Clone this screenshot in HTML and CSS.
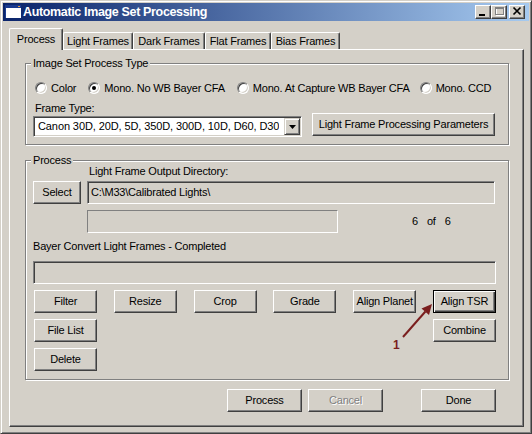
FILE: index.html
```html
<!DOCTYPE html>
<html>
<head>
<meta charset="utf-8">
<title>Automatic Image Set Processing</title>
<link rel="stylesheet" href="styles.css">
</head>
<body>
<div class="window">
  <div class="titlebar">
    <svg class="app-icon" width="16" height="14" viewBox="0 0 16 14">
      <rect x="0" y="0" width="16" height="13" fill="#ffffff"/>
      <rect x="0" y="0" width="16" height="3" fill="#1a3a8e"/>
      <rect x="0" y="0" width="1" height="13" fill="#1a3a8e"/>
      <rect x="13" y="1" width="2" height="1" fill="#e8a040"/>
    </svg>
    <span class="title">Automatic Image Set Processing</span>
    <div class="caption-buttons">
      <span class="cap-btn"><svg width="14" height="12" viewBox="0 0 14 12"><rect x="3" y="8" width="6" height="2" fill="#000"/></svg></span>
      <span class="cap-btn"><svg width="14" height="12" viewBox="0 0 14 12">
        <rect x="4.5" y="2.5" width="8" height="7" fill="none" stroke="#fff"/>
        <rect x="3.5" y="1.5" width="8" height="7" fill="none" stroke="#808080"/>
        <line x1="3.5" y1="2.5" x2="11.5" y2="2.5" stroke="#808080"/>
      </svg></span>
      <span class="cap-btn close"><svg width="14" height="12" viewBox="0 0 14 12"><path d="M3.5 1.5 L10.5 8.5 M10.5 1.5 L3.5 8.5" stroke="#000" stroke-width="1.7" fill="none"/></svg></span>
    </div>
  </div>

  <div class="tabs">
    <div class="tab active tab-process">Process</div>
    <div class="tab tab-light">Light Frames</div>
    <div class="tab tab-dark">Dark Frames</div>
    <div class="tab tab-flat">Flat Frames</div>
    <div class="tab tab-bias">Bias Frames</div>
  </div>

  <div class="panel">
    <div class="group group-type">
      <div class="group-title">Image Set Process Type</div>
      <div class="radios">
        <div class="radio"><span class="radio-circle"></span>Color</div>
        <div class="radio"><span class="radio-circle checked"></span>Mono. No WB Bayer CFA</div>
        <div class="radio"><span class="radio-circle"></span>Mono. At Capture WB Bayer CFA</div>
        <div class="radio"><span class="radio-circle"></span>Mono. CCD</div>
      </div>
      <div class="frame-row">
        <div class="frame-col">
          <div class="frame-label">Frame Type:</div>
          <div class="combo">
            <span class="combo-text">Canon 30D, 20D, 5D, 350D, 300D, 10D, D60, D30</span>
            <span class="combo-btn"><svg width="7" height="4" viewBox="0 0 7 4"><polygon points="0,0 7,0 3.5,4" fill="#000"/></svg></span>
          </div>
        </div>
        <div class="btn btn-params">Light Frame Processing Parameters</div>
      </div>
    </div>

    <div class="group group-process">
      <div class="group-title">Process</div>
      <div class="dir-row">
        <div class="btn btn-select">Select</div>
        <div class="dir-col">
          <div class="dir-label">Light Frame Output Directory:</div>
          <div class="field">C:\M33\Calibrated Lights\</div>
          <div class="status-row">
            <div class="static-box"></div>
            <div class="counter"><span>6</span><span>of</span><span>6</span></div>
          </div>
        </div>
      </div>
      <div class="bayer-label">Bayer Convert Light Frames - Completed</div>
      <div class="progress"></div>
      <div class="btn-grid">
        <div class="btn">Filter</div>
        <div class="btn">Resize</div>
        <div class="btn">Crop</div>
        <div class="btn">Grade</div>
        <div class="btn">Align Planet</div>
        <div class="btn default">Align TSR</div>
        <div class="btn col-first">File List</div>
        <div class="btn col-last">Combine</div>
        <div class="btn col-first">Delete</div>
      </div>
    </div>

    <div class="footer">
      <div class="btn btn-wide">Process</div>
      <div class="btn btn-wide disabled">Cancel</div>
      <div class="btn btn-wide btn-done">Done</div>
    </div>
  </div>

  <div class="annotation">
    <svg width="50" height="50" viewBox="0 0 50 50">
      <line x1="13" y1="37" x2="35.4" y2="11.5" stroke="#7a1e1e" stroke-width="2"/>
      <polygon points="42,4 39,15 31.5,8.5" fill="#7a1e1e"/>
    </svg>
    <span class="annotation-label">1</span>
  </div>
</div>
</body>
</html>
```

FILE: styles.css
```css
* {
  box-sizing: border-box;
}

body {
  margin: 0;
  background: #d4d0c8;
  font-family: "Liberation Sans", Arial, sans-serif;
  font-size: 11px;
  line-height: 13px;
  letter-spacing: -0.2px;
  color: #000;
}

.window {
  position: relative;
  width: 532px;
  height: 434px;
  background: #d4d0c8;
  border: 1px solid;
  border-color: #d4d0c8 #404040 #404040 #d4d0c8;
  box-shadow: inset 1px 1px #fff, inset -1px -1px #808080;
  padding: 2px;
}

/* Title bar */
.titlebar {
  display: flex;
  align-items: flex-start;
  height: 18px;
  background: linear-gradient(to right, #0a246a, #a6caf0);
}

.app-icon {
  flex: none;
  display: block;
  margin: 2px 0 0 2px;
}

.title {
  margin: 2px 0 0 2px;
  color: #fff;
  font-weight: bold;
  font-size: 12.5px;
  line-height: 14px;
  letter-spacing: -0.35px;
  white-space: nowrap;
}

.caption-buttons {
  display: flex;
  margin: 2px 4px 0 auto;
}

.cap-btn {
  display: block;
  width: 16px;
  height: 14px;
  background: #d4d0c8;
  border: 1px solid;
  border-color: #fff #404040 #404040 #fff;
  box-shadow: inset -1px -1px #808080;
}

.cap-btn svg {
  display: block;
}

.cap-btn.close {
  margin-left: 2px;
}

/* Tabs */
.tabs {
  display: flex;
  align-items: flex-end;
  height: 21px;
  margin: 7px 0 0 6px;
}

.tab {
  height: 17px;
  border: 1px solid;
  border-bottom: 0;
  border-color: #fff #404040 #404040 #fff;
  border-radius: 2px 2px 0 0;
  box-shadow: inset -1px 0 #808080;
  padding-top: 2px;
  text-align: center;
  white-space: nowrap;
  background: #d4d0c8;
}

.tab.active {
  position: relative;
  z-index: 1;
  height: 22px;
  margin-bottom: -1px;
  padding-top: 4px;
}

.tab-process { width: 54px; }
.tab-light { width: 70px; }
.tab-dark { width: 72px; }
.tab-flat { width: 66px; }
.tab-bias { width: 69px; }

/* Panel */
.panel {
  width: 515px;
  margin-left: 6px;
  border: 1px solid;
  border-color: #fff #404040 #404040 #fff;
  box-shadow: inset -1px -1px #808080;
  padding: 13px 0 14px 15px;
}

/* Group boxes */
.group {
  width: 484px;
  border: 1px solid #808080;
  box-shadow: inset 1px 1px #fff, 1px 1px #fff;
  padding: 0 0 7px 7px;
}

.group-title {
  display: table;
  height: 13px;
  margin: -7px 0 0 -2px;
  padding: 0 2px;
  background: #d4d0c8;
}

.group-process {
  margin-top: 15px;
  padding-bottom: 8px;
}

/* Radios */
.radios {
  display: flex;
  align-items: center;
  height: 14px;
  margin: 11px 0 0 2px;
}

.radio {
  display: flex;
  align-items: center;
  margin-right: 12px;
  white-space: nowrap;
}

.radio:nth-child(3) {
  margin-right: 10px;
}

.radio-circle {
  display: grid;
  place-items: center;
  width: 12px;
  height: 12px;
  margin-right: 4px;
  border-radius: 50%;
  background: #fff;
  border: 1px solid;
  border-color: #808080 #fff #fff #808080;
  box-shadow: inset 1px 1px #404040, inset -1px -1px #d4d0c8;
}

.radio-circle.checked::after {
  content: "";
  width: 4px;
  height: 4px;
  border-radius: 50%;
  background: #000;
}

/* Frame type row */
.frame-row {
  display: flex;
  align-items: flex-end;
  margin-top: 7px;
}

.frame-label {
  padding-left: 2px;
}

.combo {
  display: flex;
  align-items: center;
  width: 269px;
  height: 21px;
  margin-top: 1px;
  padding: 1px;
  background: #fff;
  border: 1px solid;
  border-color: #808080 #fff #fff #808080;
  box-shadow: inset 1px 1px #404040, inset -1px -1px #d4d0c8;
}

.combo-text {
  padding-left: 3px;
  letter-spacing: -0.1px;
  white-space: nowrap;
  overflow: hidden;
}

.combo-btn {
  display: flex;
  align-items: center;
  justify-content: center;
  flex: none;
  width: 16px;
  height: 17px;
  margin-left: auto;
  background: #d4d0c8;
  border: 1px solid;
  border-color: #d4d0c8 #404040 #404040 #d4d0c8;
  box-shadow: inset 1px 1px #fff, inset -1px -1px #808080;
}

.combo-btn svg {
  display: block;
}

/* Buttons */
.btn {
  display: flex;
  align-items: center;
  justify-content: center;
  height: 23px;
  background: #d4d0c8;
  border: 1px solid;
  border-color: #fff #404040 #404040 #fff;
  box-shadow: inset -1px -1px #808080;
  white-space: nowrap;
}

.btn.default {
  border-color: #000;
  box-shadow: inset 1px 1px #fff, inset -1px -1px #404040, inset -2px -2px #808080;
}

.btn.disabled {
  color: #808080;
  text-shadow: 1px 1px #fff;
}

.btn-params {
  width: 183px;
  margin: 0 0 1px 10px;
}

/* Process group */
.dir-row {
  display: flex;
  align-items: flex-start;
  margin-top: -2px;
}

.btn-select {
  width: 48px;
  margin-top: 16px;
}

.dir-col {
  margin-left: 6px;
}

.dir-label {
  padding-left: 2px;
}

.field {
  display: flex;
  align-items: center;
  width: 408px;
  height: 23px;
  margin-top: 3px;
  padding-left: 3px;
  border: 1px solid;
  border-color: #808080 #fff #fff #808080;
  box-shadow: inset 1px 1px #404040, inset -1px -1px #d4d0c8;
  white-space: nowrap;
}

.status-row {
  display: flex;
  align-items: center;
  height: 23px;
  margin-top: 6px;
}

.static-box {
  width: 251px;
  height: 23px;
  border: 1px solid;
  border-color: #808080 #fff #fff #808080;
}

.counter {
  display: flex;
  gap: 9px;
  margin-left: 74px;
}

.bayer-label {
  margin-top: 7px;
}

.progress {
  width: 463px;
  height: 23px;
  margin-top: 8px;
  border: 1px solid;
  border-color: #808080 #fff #fff #808080;
  box-shadow: inset 1px 1px #404040, inset -1px -1px #d4d0c8;
}

.btn-grid {
  display: grid;
  grid-template-columns: repeat(6, 63px);
  justify-content: space-between;
  row-gap: 6px;
  width: 462px;
  margin: 6px 0 0 1px;
}

.col-first { grid-column: 1; }
.col-last { grid-column: 6; }

/* Footer */
.footer {
  display: flex;
  justify-content: flex-end;
  gap: 6px;
  width: 471px;
  margin-top: 9px;
}

.btn-wide {
  width: 75px;
}

.btn-done {
  margin-left: 32px;
}

/* Annotation arrow */
.annotation {
  position: absolute;
  left: 389px;
  top: 299px;
  width: 50px;
  height: 50px;
}

.annotation svg {
  display: block;
}

.annotation-label {
  position: absolute;
  left: 3px;
  top: 38px;
  font-weight: bold;
  font-size: 12px;
  line-height: 14px;
  letter-spacing: 0;
  color: #7a1e1e;
}
```
